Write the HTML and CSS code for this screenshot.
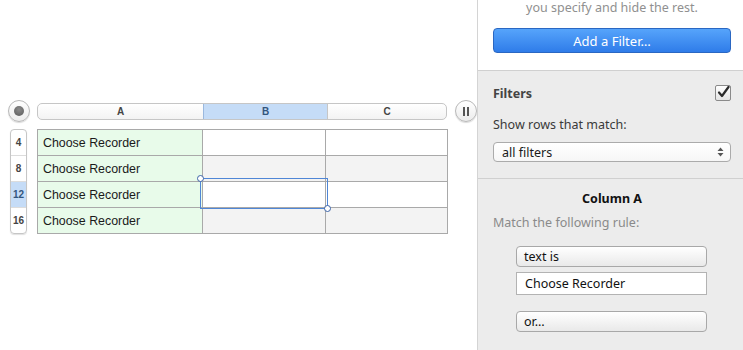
FILE: index.html
```html
<!DOCTYPE html>
<html lang="en">
<head>
    <meta charset="UTF-8">
    <title>Filter</title>
    <link rel="stylesheet" href="styles.css">
</head>
<body>
    <div class="sheet">
        <div class="head-row">
            <div class="round-btn corner-btn"><span class="dot"></span></div>
            <div class="col-heads">
                <div class="col-head col-a">A</div>
                <div class="col-head col-b selected">B</div>
                <div class="col-head col-c">C</div>
            </div>
            <div class="round-btn pause-btn"><span class="bars"></span></div>
        </div>

        <div class="body-row">
            <div class="row-heads">
                <div class="row-head">4</div>
                <div class="row-head">8</div>
                <div class="row-head selected">12</div>
                <div class="row-head">16</div>
            </div>
            <div class="grid-wrap">
                <table class="grid">
                    <tr><td class="col-a">Choose Recorder</td><td class="col-b"></td><td class="col-c"></td></tr>
                    <tr class="alt"><td class="col-a">Choose Recorder</td><td class="col-b"></td><td class="col-c"></td></tr>
                    <tr><td class="col-a">Choose Recorder</td><td class="col-b"></td><td class="col-c"></td></tr>
                    <tr class="alt"><td class="col-a">Choose Recorder</td><td class="col-b"></td><td class="col-c"></td></tr>
                </table>
                <!-- selection box over B12 -->
                <div class="selection">
                    <span class="handle handle-tl"></span>
                    <span class="handle handle-br"></span>
                </div>
            </div>
        </div>
    </div>

    <div class="sidebar">
        <div class="intro">
            <p class="intro-text">you specify and hide the rest.</p>
            <button class="add-btn">Add a Filter…</button>
        </div>

        <div class="filters">
            <div class="filters-title">
                <span>Filters</span>
                <span class="checkbox">
                    <svg width="14" height="14" viewBox="0 0 14 14">
                        <path d="M3 6.5 L6 10 L12.5 1" fill="none" stroke="#2b2b2b" stroke-width="2.2" stroke-linecap="round" stroke-linejoin="round"/>
                    </svg>
                </span>
            </div>
            <p class="label">Show rows that match:</p>
            <div class="popup">
                <span>all filters</span>
                <span class="arrows">
                    <svg width="7" height="10" viewBox="0 0 7 10">
                        <path d="M0.5 4 L3.5 0.5 L6.5 4 Z M0.5 6 L3.5 9.5 L6.5 6 Z" fill="#555"/>
                    </svg>
                </span>
            </div>
        </div>

        <div class="rule">
            <h3 class="rule-title">Column A</h3>
            <p class="rule-label">Match the following rule:</p>
            <div class="rule-controls">
                <button class="grey-btn">text is</button>
                <div class="text-field">Choose Recorder</div>
                <button class="grey-btn or-btn">or…</button>
            </div>
        </div>
    </div>
</body>
</html>
```

FILE: styles.css
```css
body {
    margin: 0;
    display: flex;
    height: 350px;
    overflow: hidden;
    background-color: #ffffff;
    font-family: "Liberation Sans", Arial, sans-serif;
    color: #222;
}

/* spreadsheet */
.sheet {
    width: 477px;
    flex-shrink: 0;
}
.head-row {
    display: flex;
    align-items: center;
    margin-top: 100px;
}
.round-btn {
    width: 20px;
    height: 20px;
    border: 1px solid #b8b8b8;
    border-radius: 50%;
    background: linear-gradient(#ffffff, #ececec);
    box-shadow: 0 1px 1px rgba(0, 0, 0, 0.15);
    display: flex;
    align-items: center;
    justify-content: center;
    flex-shrink: 0;
}
.corner-btn {
    margin-left: 8px;
}
.dot {
    width: 10px;
    height: 10px;
    border-radius: 50%;
    background: radial-gradient(circle at 50% 35%, #8a8a8a, #5a5a5a);
}
.pause-btn {
    margin-left: 8px;
}
.bars {
    width: 6px;
    height: 9px;
    border-left: 2px solid #555;
    border-right: 2px solid #555;
    box-sizing: border-box;
}
.col-heads {
    display: flex;
    margin-left: 7px;
    width: 410px;
    height: 17px;
    border: 1px solid #c6c6c6;
    border-radius: 5px;
    overflow: hidden;
    background: linear-gradient(#ffffff, #f3f3f3);
    box-sizing: border-box;
}
.col-head {
    font-size: 10px;
    font-weight: bold;
    color: #444;
    text-align: center;
    line-height: 15px;
}
.col-head.col-a { width: 165px; }
.col-head.col-b { width: 123px; }
.col-head.col-c { flex: 1; border-left: 1px solid #c6c6c6; }
.col-head.selected {
    background: #c5dcf7;
    border-left: 1px solid #9ab8de;
    color: #33557d;
}

.body-row {
    display: flex;
    margin-top: 7px;
}
.row-heads {
    margin-left: 10px;
    width: 17px;
    border: 1px solid #c6c6c6;
    border-radius: 4px;
    overflow: hidden;
    box-shadow: 0 1px 1px rgba(0, 0, 0, 0.12);
    box-sizing: border-box;
}
.row-head {
    height: 25px;
    line-height: 25px;
    font-size: 10px;
    font-weight: bold;
    color: #444;
    text-align: center;
    border-bottom: 1px solid #dcdcdc;
}
.row-head:last-child { border-bottom: none; }
.row-head.selected {
    background: #c5dcf7;
    color: #33557d;
}

.grid-wrap {
    position: relative;
    margin-left: 10px;
}
.grid {
    border-collapse: collapse;
    width: 411px;
    table-layout: fixed;
}
.grid td {
    border: 1px solid #a9a9a9;
    height: 25px;
    padding: 0 5px;
    font-size: 12.4px;
    color: #1a1a1a;
}
.grid td.col-a {
    width: 154px;
    background-color: #e8fbea;
}
.grid td.col-b { width: 112px; }
.grid tr.alt td.col-b,
.grid tr.alt td.col-c {
    background-color: #f3f3f3;
}
.selection {
    position: absolute;
    left: 163px;
    top: 49px;
    width: 126px;
    height: 29px;
    border: 1px solid #4f86d6;
}
.handle {
    position: absolute;
    width: 5px;
    height: 5px;
    border: 1px solid #3c63a8;
    border-radius: 50%;
    background: #ffffff;
}
.handle-tl { left: -4px; top: -4px; }
.handle-br { right: -4px; bottom: -4px; }

/* sidebar */
.sidebar {
    flex: 1;
    border-left: 1px solid #d4d4d4;
    background-color: #ececec;
    font-family: "Noto Sans", "DejaVu Sans", sans-serif;
    font-size: 12.5px;
}
.intro {
    background-color: #ffffff;
    border-bottom: 1px solid #d0d0d0;
    height: 70px;
    padding: 0 12px 0 15px;
}
.intro-text {
    margin: 0;
    padding-top: 1px;
    line-height: 14px;
    text-align: center;
    color: #909090;
}
.add-btn {
    display: block;
    width: 100%;
    height: 25px;
    margin-top: 13px;
    border: 1px solid #2a67c2;
    border-radius: 4px;
    background: linear-gradient(#56a4fb, #2f7ce9);
    color: #ffffff;
    font-family: inherit;
    font-size: 13px;
}
.filters {
    padding: 14px 12px 16px 15px;
    border-bottom: 1px solid #d0d0d0;
}
.filters-title {
    display: flex;
    justify-content: space-between;
    align-items: center;
    font-weight: bold;
    color: #444;
    height: 16px;
}
.checkbox {
    width: 14px;
    height: 14px;
    border: 1px solid #8a8a8a;
    border-radius: 2px;
    background: linear-gradient(#ffffff, #e4e4e4);
    display: flex;
}
.label {
    margin: 16px 0 0;
    color: #3a3a3a;
    line-height: 16px;
}
.popup {
    display: flex;
    justify-content: space-between;
    align-items: center;
    margin-top: 9px;
    height: 20px;
    padding: 0 6px 0 8px;
    border: 1px solid #ababab;
    border-radius: 4px;
    background: linear-gradient(#ffffff, #f6f6f6);
    box-sizing: border-box;
    color: #1a1a1a;
}
.arrows { display: flex; }

.rule {
    padding: 12px 12px 0 15px;
}
.rule-title {
    margin: 0;
    text-align: center;
    font-size: 12.5px;
    line-height: 16px;
    color: #111;
}
.rule-label {
    margin: 8px 0 0;
    line-height: 16px;
    color: #8a8a8a;
}
.rule-controls {
    padding: 15px 0 0 23px;
    width: 191px;
}
.grey-btn {
    display: block;
    width: 100%;
    height: 21px;
    padding: 0 7px;
    text-align: left;
    border: 1px solid #a8a8a8;
    border-radius: 4px;
    background: linear-gradient(#ffffff, #e9e9e9);
    font-family: inherit;
    font-size: 12.5px;
    color: #111;
}
.text-field {
    margin-top: 5px;
    height: 23px;
    line-height: 22px;
    padding: 0 8px;
    border: 1px solid #b3b3b3;
    background: #ffffff;
    box-sizing: border-box;
    color: #111;
}
.or-btn {
    margin-top: 16px;
}
```
